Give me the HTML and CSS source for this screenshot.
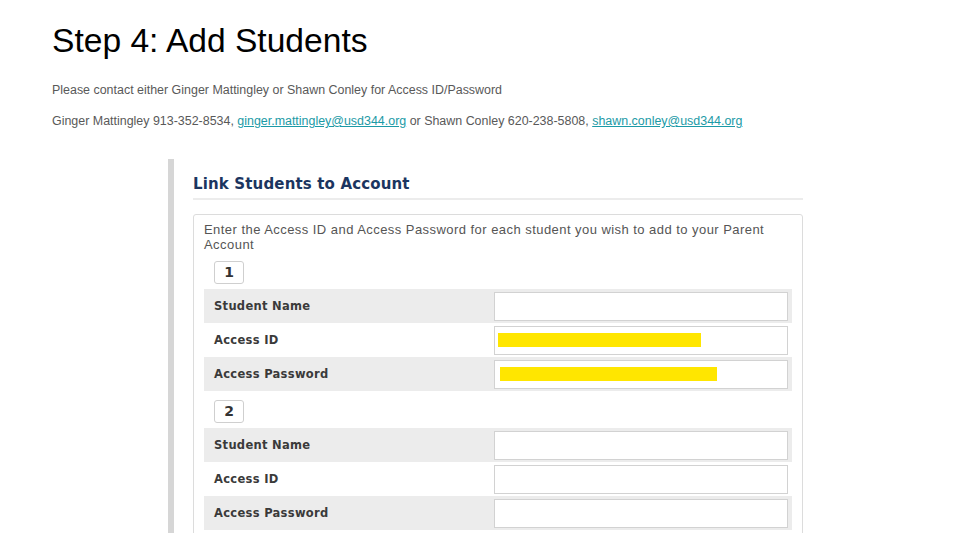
FILE: index.html
```html
<!DOCTYPE html>
<html lang="en">
    <head>
        <meta charset="UTF-8" />
        <title>Step 4: Add Students</title>
        <link rel="stylesheet" href="styles.css">
    </head>
    <body>
        <h1 class="title">Step 4: Add Students</h1>

        <p class="note">Please contact either Ginger Mattingley or Shawn Conley for Access ID/Password</p>
        <p class="note">Ginger Mattingley 913-352-8534, <a href="#">ginger.mattingley@usd344.org</a> or Shawn Conley 620-238-5808, <a href="#">shawn.conley@usd344.org</a></p>

        <!-- screenshot of the parent portal -->
        <section class="shot">
            <h2 class="shot-head">Link Students to Account</h2>
            <div class="panel">
                <p class="intro">Enter the Access ID and Access Password for each student you wish to add to your Parent Account</p>

                <div class="num">1</div>
                <div class="rows">
                    <div class="row">
                        <span class="label">Student Name</span>
                        <div class="field"></div>
                    </div>
                    <div class="row">
                        <span class="label">Access ID</span>
                        <div class="field"><span class="mark mark-id"></span></div>
                    </div>
                    <div class="row">
                        <span class="label">Access Password</span>
                        <div class="field"><span class="mark mark-pw"></span></div>
                    </div>
                </div>

                <div class="num">2</div>
                <div class="rows">
                    <div class="row">
                        <span class="label">Student Name</span>
                        <div class="field"></div>
                    </div>
                    <div class="row">
                        <span class="label">Access ID</span>
                        <div class="field"></div>
                    </div>
                    <div class="row">
                        <span class="label">Access Password</span>
                        <div class="field"></div>
                    </div>
                </div>
            </div>
        </section>
    </body>
</html>
```

FILE: styles.css
```css
html,
body {
    margin: 0;
    padding: 0;
    height: 100%;
    overflow: hidden;
}
body {
    background: #fff;
    font-family: "Liberation Sans", Arial, sans-serif;
    padding: 22px 0 0 52px;
    box-sizing: border-box;
}

/* slide title */
.title {
    margin: 0;
    font-size: 33.6px;
    font-weight: normal;
    line-height: 38px;
    color: #000;
}

.note {
    margin: 0;
    font-size: 12.45px;
    line-height: 16px;
    color: #595959;
}
.note:first-of-type {
    margin-top: 22px;
}
.note + .note {
    margin-top: 15px;
}
.note a {
    color: #1b9aa6;
    text-decoration: underline;
}

/* screenshot box */
.shot {
    margin: 30px 0 0 116px;
    width: 610px;
    height: 359px;
    border-left: 6px solid #d6d6d6;
    padding: 15px 0 0 19px;
    overflow: hidden;
}
.shot-head {
    margin: 0;
    padding-bottom: 4px;
    font-family: "DejaVu Sans", Verdana, sans-serif;
    font-size: 15px;
    letter-spacing: 0.15px;
    line-height: 20px;
    color: #1b3560;
    border-bottom: 2px solid #ececec;
}

.panel {
    margin-top: 14px;
    border: 1px solid #dcdcdc;
    border-radius: 3px;
    padding: 7px 10px 3px 10px;
    height: 330px;
    box-sizing: border-box;
}
.intro {
    margin: 0;
    font-size: 13px;
    letter-spacing: 0.45px;
    line-height: 15px;
    color: #555;
}

.num {
    margin: 9px 0 5px 10px;
    width: 28px;
    height: 21px;
    border: 1px solid #cfcfcf;
    border-radius: 3px;
    font-family: "DejaVu Sans", Verdana, sans-serif;
    font-size: 14px;
    font-weight: bold;
    line-height: 21px;
    text-align: center;
    color: #333;
}

.rows {
    display: flex;
    flex-direction: column;
}
.row {
    display: flex;
    align-items: center;
    height: 34px;
    padding-right: 4px;
}
.row:nth-child(odd) {
    background: #ececec;
}
.label {
    flex: 1;
    padding-left: 10px;
    font-family: "DejaVu Sans", Verdana, sans-serif;
    font-size: 11.5px;
    letter-spacing: 0.3px;
    font-weight: bold;
    color: #3a3a3a;
}
.field {
    width: 292px;
    height: 27px;
    border: 1px solid #d2d2d2;
    background: #fff;
    display: flex;
    align-items: center;
}

/* yellow highlights over the typed values */
.mark {
    display: block;
    height: 14px;
    background: #ffe600;
}
.mark-id {
    margin-left: 3px;
    width: 203px;
}
.mark-pw {
    margin-left: 5px;
    width: 217px;
}
```
